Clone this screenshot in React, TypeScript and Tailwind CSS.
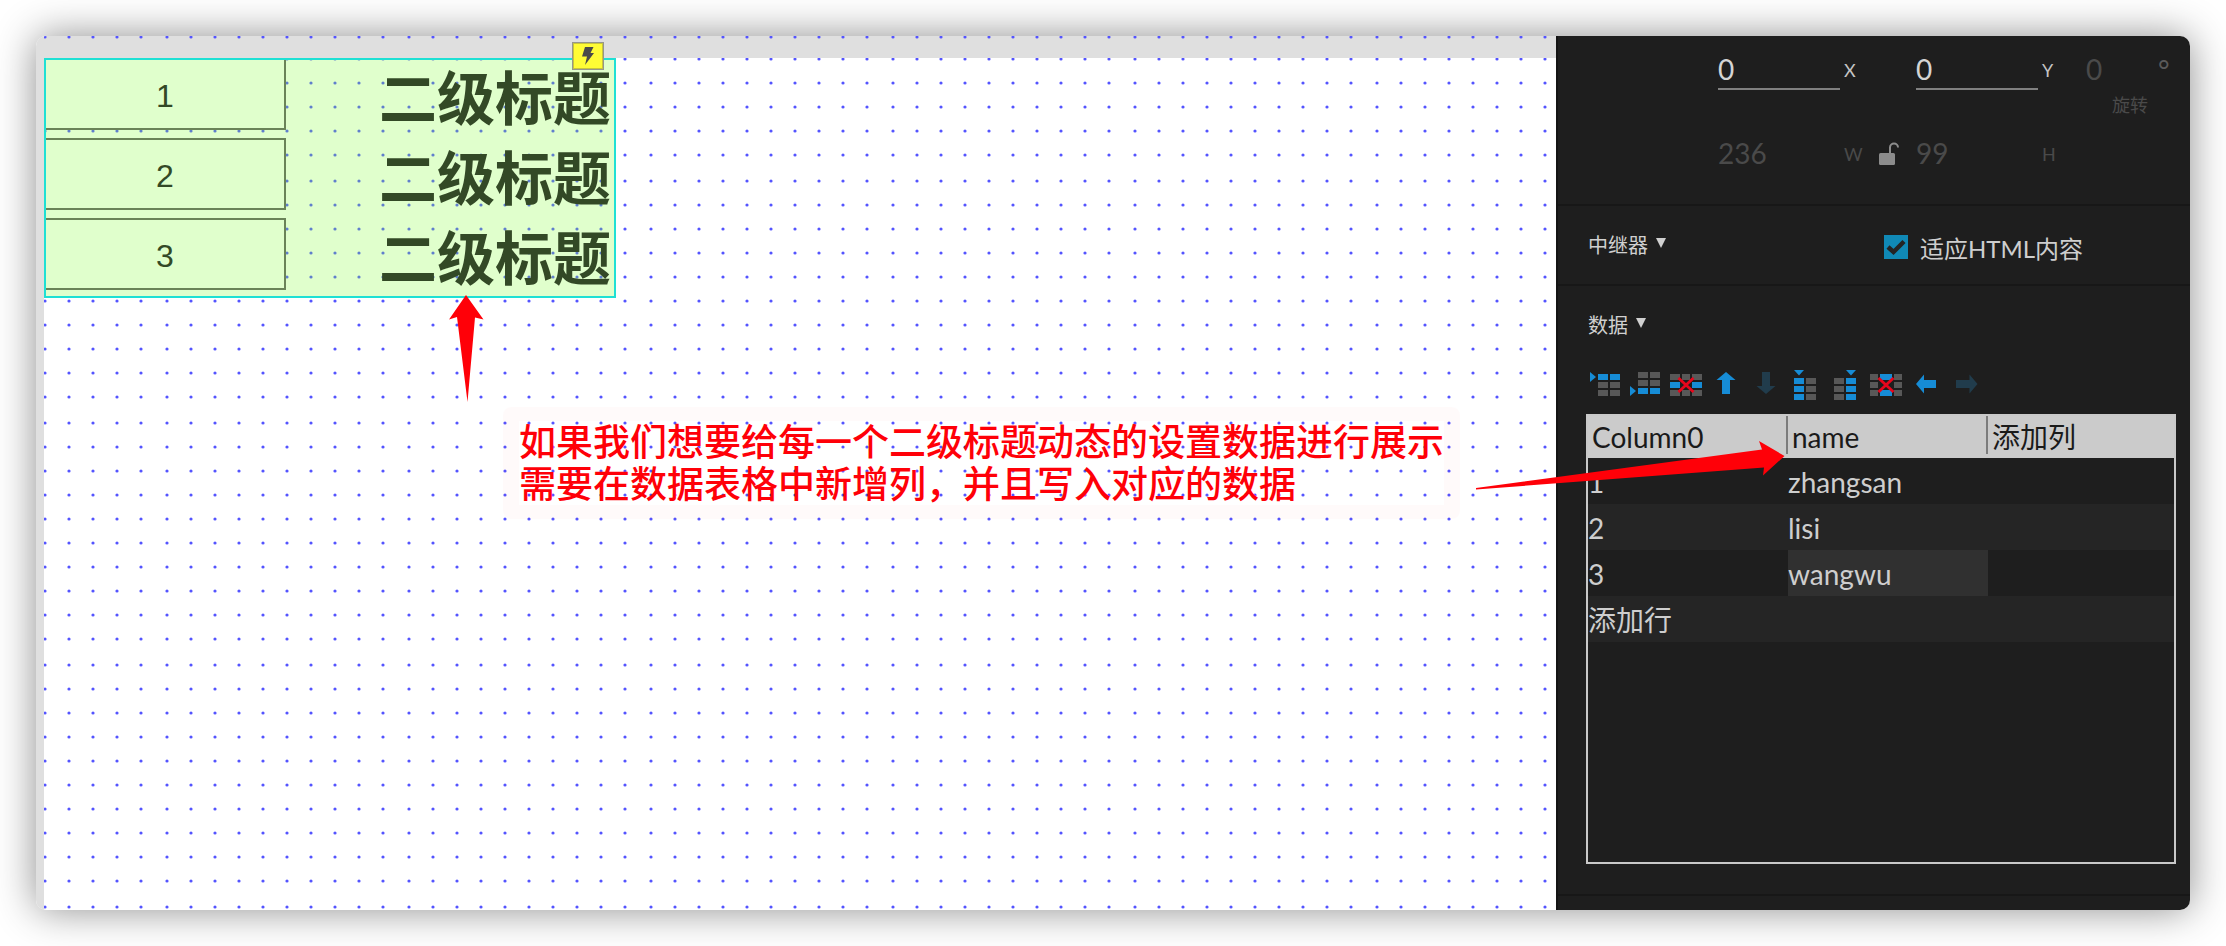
import type { ReactNode } from "react";

const BLUE = "#168cd6";
const GRAY = "#585858";
const FADED = "#213c4c";
const RED = "#e8061c";

// Grid dots sit on even pixels of a 24.2px pitch; the sequence repeats every ten dots.
const OFFSETS = Array.from({ length: 10 }, (_, i) => Math.round(i * 12.1) * 2);

function Dots({ id, rows }: { id: string; rows: number[] }) {
  return (
    <svg className="absolute inset-0 h-full w-full" aria-hidden="true">
      <defs>
        <pattern id={id} x="-3" y="-3" width="242" height="242" patternUnits="userSpaceOnUse">
          {rows.map((y) =>
            OFFSETS.map((x) => <circle key={`${x}-${y}`} cx={x + 4} cy={y + 4} r="1.6" fill="#5454ff" />),
          )}
        </pattern>
      </defs>
      <rect width="100%" height="100%" fill={`url(#${id})`} />
    </svg>
  );
}

type Cell = [number, number, number, boolean];

function Icon({ cells = [], children }: { cells?: Cell[]; children?: ReactNode }) {
  return (
    <svg className="block h-8 w-8" viewBox="0 0 32 32" aria-hidden="true">
      {cells.map(([x, y, w, on]) => (
        <rect key={`${x}-${y}`} x={x} y={y} width={w} height="6" fill={on ? BLUE : GRAY} />
      ))}
      {children}
    </svg>
  );
}

function grid(cols: [number, number][], rows: number[], on: (c: number, r: number) => boolean): Cell[] {
  return rows.flatMap((y, r) => cols.map(([x, w], c): Cell => [x, y, w, on(c, r)]));
}

const cross = (
  <>
    <rect x="10" y="11" width="12" height="8" fill="#1e1e1e" />
    <path d="M8.500 8L23.500 22M23.500 8L8.500 22" stroke={RED} strokeWidth="2.800" fill="none" />
  </>
);

const TOOLS: { label: string; icon: ReactNode; disabled?: boolean }[] = [
  {
    label: "在上方插入行",
    icon: (
      <Icon cells={grid([[8, 10], [20, 10]], [4, 12, 20], (_, r) => r === 0)}>
        <path d="M0 2L6 7L0 12Z" fill={BLUE} />
      </Icon>
    ),
  },
  {
    label: "在下方插入行",
    icon: (
      <Icon cells={grid([[8, 10], [20, 10]], [2, 10, 18], (_, r) => r === 2)}>
        <path d="M0 16L6 21L0 26Z" fill={BLUE} />
      </Icon>
    ),
  },
  {
    label: "删除行",
    icon: <Icon cells={grid([[0, 10], [12, 8], [22, 10]], [4, 12, 20], (_, r) => r === 1)}>{cross}</Icon>,
  },
  {
    label: "上移行",
    icon: (
      <Icon>
        <path d="M16 2L25.500 10H20V24H12V10H6.500Z" fill={BLUE} />
      </Icon>
    ),
  },
  {
    label: "下移行",
    disabled: true,
    icon: (
      <Icon>
        <path d="M16 24L25.500 16H20V2H12V16H6.500Z" fill={FADED} />
      </Icon>
    ),
  },
  {
    label: "在左侧插入列",
    icon: (
      <Icon cells={grid([[4, 10], [16, 10]], [8, 16, 24], (c) => c === 0)}>
        <path d="M4 0H14L9 5.500Z" fill={BLUE} />
      </Icon>
    ),
  },
  {
    label: "在右侧插入列",
    icon: (
      <Icon cells={grid([[4, 10], [16, 10]], [8, 16, 24], (c) => c === 1)}>
        <path d="M16 0H26L21 5.500Z" fill={BLUE} />
      </Icon>
    ),
  },
  {
    label: "删除列",
    icon: <Icon cells={grid([[0, 8], [10, 12], [24, 8]], [4, 12, 20], (c) => c === 1)}>{cross}</Icon>,
  },
  {
    label: "左移列",
    icon: (
      <Icon>
        <path d="M6 14L14 4.500V10H26V18H14V23.500Z" fill={BLUE} />
      </Icon>
    ),
  },
  {
    label: "右移列",
    disabled: true,
    icon: (
      <Icon>
        <path d="M27.500 14L19.500 4.500V10H6V18H19.500V23.500Z" fill={FADED} />
      </Icon>
    ),
  },
];

const ROWS = [
  ["1", "zhangsan"],
  ["2", "lisi"],
  ["3", "wangwu"],
];

function SectionTitle({ children }: { children: ReactNode }) {
  return (
    <button type="button" className="flex items-center gap-2 text-xl leading-6 text-[#d0d0d0]">
      {children}
      <svg className="mb-1 h-[10px] w-[10px]" viewBox="0 0 10 10" aria-hidden="true">
        <path d="M0 0H10L5 10Z" fill="#d0d0d0" />
      </svg>
    </button>
  );
}

function Repeater() {
  return (
    <div className="relative w-[572px] border-2 border-[#1fe0d4] bg-[rgba(131,255,51,0.25)] bg-clip-padding">
      <ul className="flex flex-col gap-2 overflow-hidden pb-1">
        {ROWS.map(([n]) => (
          <li key={n} className="flex h-[72px] items-center justify-between pr-[3px]">
            <span className="-mt-1 flex h-[72px] w-[240px] items-center justify-center border-2 border-l-0 border-[#6a8358] bg-[#e0ffcc] pt-1 font-['Liberation_Sans',sans-serif] text-[32px] text-[#334926]">
              {n}
            </span>
            <h2 className="pt-1 text-[58px] leading-[68px] font-bold text-[#334926]">二级标题</h2>
          </li>
        ))}
      </ul>
    </div>
  );
}

function Canvas() {
  return (
    <main className="flex min-w-0 flex-1 flex-col bg-[#dfdfdf] pl-2">
      <div className="relative h-[22px]">
        <Dots id="ruler-dots" rows={[0]} />
      </div>
      <div className="relative flex-1 bg-white">
        <Dots id="page-dots" rows={OFFSETS} />
        <Repeater />
        <span className="absolute top-[-16px] left-[528px] flex h-7 w-8 items-center justify-center border border-[#96968c] bg-[#fffc35] inset-ring inset-ring-[#c8c53c]">
          <svg className="h-[18px] w-[14px]" viewBox="0 0 14 18" aria-hidden="true">
            <path d="M4 0H12.500L9.500 6H13L4 18L6 9.500H1Z" fill="#4a4a4a" />
          </svg>
        </span>
        <p className="absolute top-[349px] left-[459px] rounded-lg border-x-16 border-y-14 border-[rgba(255,0,0,0.02)] text-[37px] leading-[42px] font-medium whitespace-nowrap text-[#ff0008]">
          如果我们想要给每一个二级标题动态的设置数据进行展示
          <br />
          需要在数据表格中新增列，并且写入对应的数据
        </p>
        <svg className="absolute top-[237px] left-[405px] h-[108px] w-[36px]" viewBox="0 0 36 108" aria-hidden="true">
          <path d="M17 0L34.500 24.500L26 22.500L18.500 107L8 22L0 24.500Z" fill="#ff0008" />
        </svg>
      </div>
    </main>
  );
}

function Field({ id, unit, value, disabled }: { id: string; unit: string; value: string; disabled?: boolean }) {
  return (
    <>
      <input
        id={id}
        defaultValue={value}
        disabled={disabled}
        className="h-10 w-[122px] border-b-2 border-[#808080] bg-transparent text-[28px] text-[#d4d4d4] outline-none disabled:border-transparent disabled:text-[#4a4a4a]"
      />
      <label htmlFor={id} className={disabled ? "w-6 pl-1 text-lg text-[#4a4a4a]" : "w-6 pl-1 text-lg text-[#c4c4c4]"}>
        {unit}
      </label>
    </>
  );
}

function Inspector() {
  return (
    <aside className="flex w-[634px] shrink-0 flex-col border-l-2 border-[#141414] bg-[#1e1e1e]">
      <section className="border-b-2 border-[#171717] pt-[14px] pb-[30px] pl-[160px]">
        <div className="grid grid-cols-[198px_170px_1fr] items-start">
          <div className="flex items-center">
            <Field id="pos-x" unit="X" value="0" />
          </div>
          <div className="flex items-center">
            <Field id="pos-y" unit="Y" value="0" />
          </div>
          <div className="flex flex-col">
            <div className="flex h-10 items-center">
              <input
                id="rotation"
                defaultValue="0"
                disabled
                className="h-10 w-[72px] border-b-2 border-transparent bg-transparent text-[28px] text-[#4a4a4a]"
              />
              <span className="text-[28px] text-[#5a5a5a]">°</span>
            </div>
            <label htmlFor="rotation" className="pl-[26px] text-lg leading-[30px] text-[#4a4a4a]">
              旋转
            </label>
          </div>
        </div>
        <div className="mt-[14px] grid grid-cols-[198px_170px_1fr]">
          <div className="flex items-center">
            <Field id="size-w" unit="W" value="236" disabled />
            <button type="button" aria-label="锁定宽高比" className="ml-[15px]">
              <svg className="block h-6 w-[21px]" viewBox="0 0 21 24" aria-hidden="true">
                <rect x="0" y="11" width="16" height="12" rx="1.500" fill="#8c8c8c" />
                <path d="M11 11V5.500a4 4 0 0 1 8 0" fill="none" stroke="#8c8c8c" strokeWidth="2" />
              </svg>
            </button>
          </div>
          <div className="flex items-center">
            <Field id="size-h" unit="H" value="99" disabled />
          </div>
        </div>
      </section>

      <section className="grid h-20 grid-cols-[296px_1fr] items-center border-b-2 border-[#171717] pl-[30px]">
        <SectionTitle>中继器</SectionTitle>
        <div className="flex items-center gap-3 pt-1">
          <span className="relative h-6 w-6">
            <input
              id="fit-html"
              type="checkbox"
              defaultChecked
              className="block h-6 w-6 appearance-none bg-[#4a4a4a] checked:bg-[#1089b6]"
            />
            <svg className="pointer-events-none absolute inset-0 h-6 w-6" viewBox="0 0 24 24" aria-hidden="true">
              <path d="M4 12L9.500 17L20 6.500" fill="none" stroke="#242424" strokeWidth="4.500" />
            </svg>
          </span>
          <label htmlFor="fit-html" className="pt-1 text-2xl leading-7 text-[#cecece]">
            适应HTML内容
          </label>
        </div>
      </section>

      <section className="flex flex-1 flex-col border-b-2 border-[#171717] pr-[14px] pb-[30px] pl-7">
        <div className="flex h-[76px] items-center pt-[2px] pl-[2px]">
          <SectionTitle>数据</SectionTitle>
        </div>
        <div role="toolbar" aria-label="数据" className="mt-2 flex gap-2 pl-1">
          {TOOLS.map((t) => (
            <button key={t.label} type="button" aria-label={t.label} disabled={t.disabled}>
              {t.icon}
            </button>
          ))}
        </div>
        <div className="mt-3 flex-1 border-2 border-[#c9c9c9]">
          <table className="w-full table-fixed border-collapse text-left text-[28px] leading-8 text-[#cecece]">
            <colgroup>
              <col className="w-[200px]" />
              <col className="w-[200px]" />
              <col />
            </colgroup>
            <thead>
              <tr className="h-[42px] bg-[#cbcbcb] text-[#1a1a1a]">
                {["Column0", "name"].map((h) => (
                  <th key={h} className="p-0 pb-1 font-normal">
                    <div className="border-r-2 border-[#7c7c7c] pt-[5px] pb-px pl-1">{h}</div>
                  </th>
                ))}
                <th className="p-0 pb-1 font-normal">
                  <button type="button" className="block pt-[5px] pb-px pl-1">
                    添加列
                  </button>
                </th>
              </tr>
            </thead>
            <tbody>
              {ROWS.map(([n, name]) => (
                <tr key={n} className="h-[46px] even:bg-[#252525]">
                  <td className="p-0 pt-[2px]">{n}</td>
                  <td className={name === "wangwu" ? "bg-[#303030] p-0 pt-[2px]" : "p-0 pt-[2px]"}>{name}</td>
                  <td className="p-0"></td>
                </tr>
              ))}
              <tr className="h-[46px] bg-[#252525]">
                <td className="p-0 pt-[2px]" colSpan={3}>
                  <button type="button" className="block">
                    添加行
                  </button>
                </td>
              </tr>
            </tbody>
          </table>
        </div>
      </section>
      <div className="h-[14px]" />
    </aside>
  );
}

export default function App() {
  return (
    <div className="flex min-h-screen bg-white p-9 font-[Lato,'Noto_Sans_CJK_SC',sans-serif]">
      <div className="relative flex flex-1 rounded-[10px] shadow-[0_0_40px_rgba(0,0,0,0.45)]">
        <div className="flex flex-1 overflow-hidden rounded-[10px]">
          <Canvas />
          <Inspector />
        </div>
        <svg
          className="pointer-events-none absolute top-[405px] right-[405px] h-[50px] w-[310px]"
          viewBox="0 0 310 50"
          aria-hidden="true"
        >
          <path d="M1 47L287 8.500L284 0L309.500 15L288 34.500L289 26.500L1 48.500Z" fill="#ff0008" />
        </svg>
      </div>
    </div>
  );
}
